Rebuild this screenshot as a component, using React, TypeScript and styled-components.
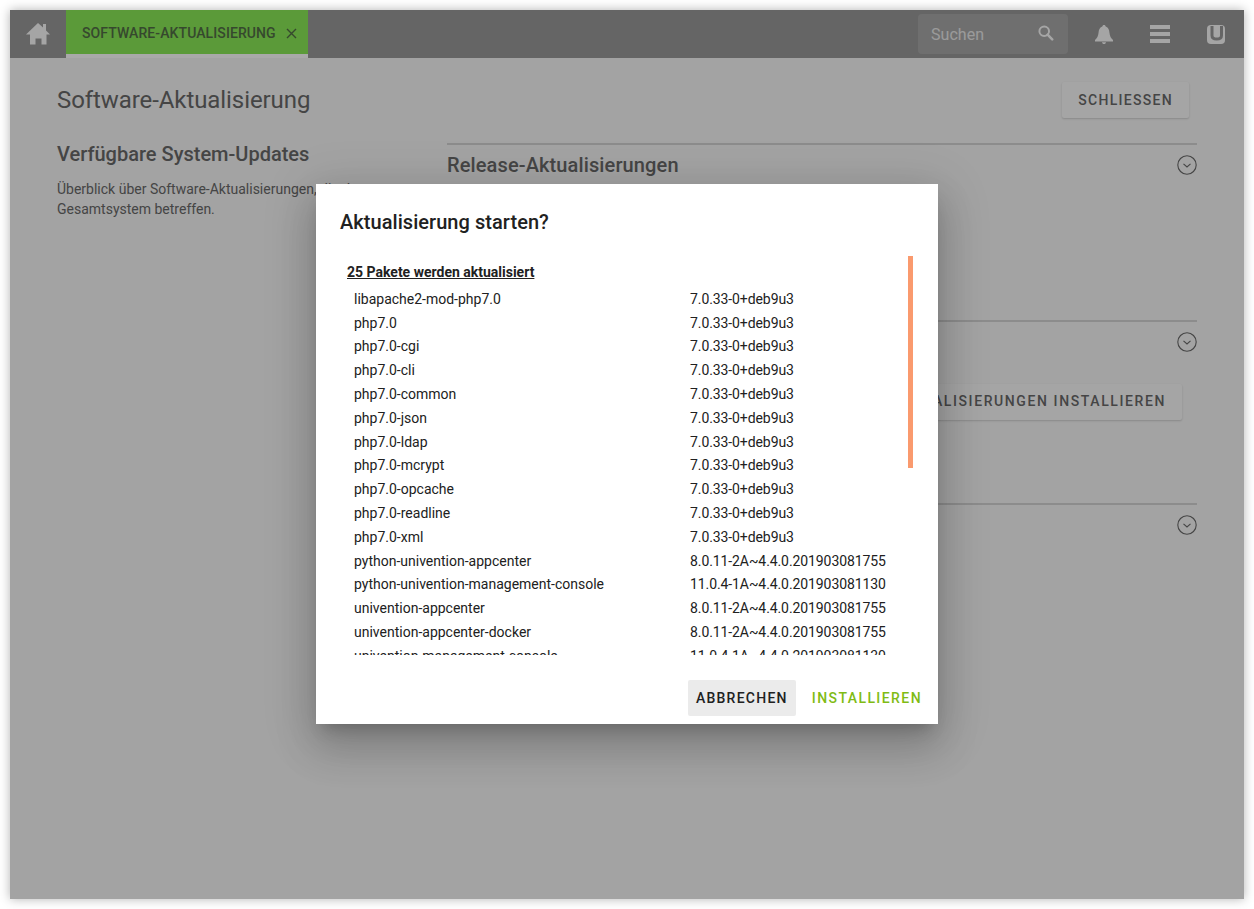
import React from "react";
import styled, { createGlobalStyle } from "styled-components";

const Global = createGlobalStyle`
  html, body { margin: 0; padding: 0; background: #fff; }
  body { font-family: Roboto, "Liberation Sans", sans-serif; font-size: 14px; }
  * { box-sizing: border-box; }
`;

const Page = styled.div`
  width: 1254px;
  height: 909px;
  padding: 10px;
  background: #fff;
  overflow: hidden;
`;

const Frame = styled.div`
  position: relative;
  width: 1234px;
  height: 889px;
  display: flex;
  flex-direction: column;
  background: #f0f0f0;
  box-shadow: 0 0 10px rgba(0, 0, 0, 0.3);
`;

const TopBar = styled.header`
  height: 48px;
  flex: none;
  display: flex;
  align-items: stretch;
  background: #969696;
`;

const BarIconCell = styled.div`
  width: 56px;
  flex: none;
  display: flex;
  align-items: center;
  justify-content: center;
  color: #f4f4f4;
`;

const Tab = styled.div`
  width: 242px;
  display: flex;
  align-items: center;
  justify-content: space-between;
  padding: 2px 11px 0 16px;
  background: #86e354;
  border-bottom: 4px solid #fafafa;
  color: #506b45;
  font-size: 14px;
  font-weight: 500;
  white-space: nowrap;
`;

const TabLabel = styled.span`
  letter-spacing: 0.09px;
`;

const Spacer = styled.div`
  flex: 1;
`;

const SearchBox = styled.div`
  width: 150px;
  height: 40px;
  margin: 4px 8px 0 0;
  padding: 0 14px 0 13px;
  display: flex;
  align-items: center;
  justify-content: space-between;
  border-radius: 4px;
  background: #a4a4a4;
  color: #e4e4e4;
  font-size: 16px;
  letter-spacing: 0.04px;
`;

const SearchGlyph = styled.span`
  display: flex;
  margin-top: -2px;
  color: #f4f4f4;
`;

const Main = styled.main`
  flex: 1;
  padding: 24px 47px 0;
`;

const TitleRow = styled.div`
  height: 36px;
  display: flex;
  align-items: center;
  justify-content: space-between;
  padding-right: 8px;
`;

const PageTitle = styled.h1`
  margin: 0;
  color: #666;
  font-size: 24px;
  font-weight: 400;
  letter-spacing: -0.08px;
`;

const RaisedButton = styled.div<{ $tracking: number; $lift?: number }>`
  height: 36px;
  display: inline-flex;
  align-items: center;
  padding: 0 16px ${(p) => p.$lift ?? 0}px;
  border-radius: 2px;
  background: #f4f4f4;
  color: #666;
  font-size: 14px;
  font-weight: 500;
  letter-spacing: ${(p) => p.$tracking}px;
  white-space: nowrap;
  box-shadow: 0 1px 2px rgba(0, 0, 0, 0.16);
`;

const Columns = styled.div`
  display: grid;
  grid-template-columns: 390px 750px;
  margin-top: 25px;
`;

const SideHeading = styled.h2`
  margin: 0;
  color: #666;
  font-size: 20px;
  font-weight: 500;
  line-height: 22px;
`;

const SideText = styled.p`
  margin: 14px 0 0;
  width: 330px;
  color: #666;
  font-size: 14px;
  line-height: 20px;
`;

const Section = styled.section<{ $h: number }>`
  height: ${(p) => p.$h}px;
  border-top: 2px solid #cfcfcf;
  padding-top: 10px;
`;

const SectionHeader = styled.div`
  display: flex;
  align-items: center;
  justify-content: space-between;
  height: 20px;
`;

const SectionTitle = styled.h3`
  margin: 0;
  color: #666;
  font-size: 20px;
  font-weight: 500;
  letter-spacing: 0.12px;
`;

const SectionAction = styled.div`
  display: flex;
  justify-content: flex-end;
  padding: 32px 15px 0 0;
`;

const Overlay = styled.div`
  position: absolute;
  inset: 0;
  display: flex;
  align-items: center;
  justify-content: center;
  background: rgba(0, 0, 0, 0.32);
`;

const Dialog = styled.div`
  position: relative;
  width: 622px;
  height: 540px;
  margin-top: -1px;
  display: flex;
  flex-direction: column;
  background: #fff;
  box-shadow: 0 11px 15px -7px rgba(0, 0, 0, 0.2), 0 24px 38px 3px rgba(0, 0, 0, 0.14),
    0 9px 46px 8px rgba(0, 0, 0, 0.12);
`;

const DialogTitle = styled.h2`
  margin: 0;
  padding: 24px 24px 0;
  height: 72px;
  color: #212121;
  font-size: 20px;
  font-weight: 500;
  line-height: 28px;
  letter-spacing: 0.05px;
`;

const DialogBody = styled.div`
  height: 399px;
  margin: 0 24px;
  overflow: hidden;
  padding: 7px 0 0 7px;
`;

const ListHeading = styled.div`
  color: #212121;
  font-size: 14px;
  font-weight: 700;
  line-height: 18px;
  text-decoration: underline;
  margin-bottom: 6.8px;
`;

const PackageRow = styled.div`
  display: grid;
  grid-template-columns: 336px 1fr;
  padding-left: 7px;
  color: #212121;
  font-size: 14px;
  line-height: 23.8px;
  white-space: nowrap;
`;

const PackageVersion = styled.span`
  letter-spacing: -0.09px;
`;

const ScrollThumb = styled.div`
  position: absolute;
  top: 72px;
  right: 25px;
  width: 5px;
  height: 212px;
  background: #fa9a6e;
`;

const DialogActions = styled.div`
  display: flex;
  justify-content: flex-end;
  align-items: center;
  gap: 8px;
  padding: 25px 8px 0 0;
`;

const FlatButton = styled.div<{ $primary?: boolean }>`
  height: 36px;
  display: inline-flex;
  align-items: center;
  padding: 0 8px;
  border-radius: 2px;
  background: ${(p) => (p.$primary ? "transparent" : "#ebebeb")};
  color: ${(p) => (p.$primary ? "#80bb14" : "#212121")};
  font-size: 14px;
  font-weight: 500;
  letter-spacing: ${(p) => (p.$primary ? 1.42 : 1.25)}px;
`;

const packages: [string, string][] = [
  ["libapache2-mod-php7.0", "7.0.33-0+deb9u3"],
  ["php7.0", "7.0.33-0+deb9u3"],
  ["php7.0-cgi", "7.0.33-0+deb9u3"],
  ["php7.0-cli", "7.0.33-0+deb9u3"],
  ["php7.0-common", "7.0.33-0+deb9u3"],
  ["php7.0-json", "7.0.33-0+deb9u3"],
  ["php7.0-ldap", "7.0.33-0+deb9u3"],
  ["php7.0-mcrypt", "7.0.33-0+deb9u3"],
  ["php7.0-opcache", "7.0.33-0+deb9u3"],
  ["php7.0-readline", "7.0.33-0+deb9u3"],
  ["php7.0-xml", "7.0.33-0+deb9u3"],
  ["python-univention-appcenter", "8.0.11-2A~4.4.0.201903081755"],
  ["python-univention-management-console", "11.0.4-1A~4.4.0.201903081130"],
  ["univention-appcenter", "8.0.11-2A~4.4.0.201903081755"],
  ["univention-appcenter-docker", "8.0.11-2A~4.4.0.201903081755"],
  ["univention-management-console", "11.0.4-1A~4.4.0.201903081130"],
];

const HomeIcon = () => (
  <svg width="24" height="22" viewBox="0 0 24 22" fill="currentColor">
    <path d="M12 0 17 4.500V1h3v6.500l4 4h-3.500v10h-5v-6h-6v6H4v-10H0z" />
  </svg>
);

const CloseIcon = () => (
  <svg width="11" height="11" viewBox="0 0 11 11" stroke="currentColor" strokeWidth="1.4" fill="none">
    <path d="M1 1 10 10M10 1 1 10" />
  </svg>
);

const SearchIcon = () => (
  <svg width="16" height="16" viewBox="0 0 18 18" fill="none" stroke="currentColor">
    <circle cx="7" cy="7" r="5.400" strokeWidth="2.200" />
    <path d="M10.800 10.800 16 16.200" strokeWidth="2.800" strokeLinecap="round" />
  </svg>
);

const BellIcon = () => (
  <svg width="18" height="19" viewBox="0 0 18 19" fill="currentColor">
    <path d="M9 0c1 0 1.500.6 1.700 1.500 2.800 1 3.500 3.500 3.800 6.500.3 3 1.300 5 3.500 7v1.500H0V15c2.200-2 3.200-4 3.500-7 .3-3 1-5.500 3.800-6.500C7.500.6 8 0 9 0z" />
    <path d="M7 17.200h4c0 1.100-1 1.800-2 1.800s-2-.7-2-1.800z" />
  </svg>
);

const MenuIcon = () => (
  <svg width="20" height="18" viewBox="0 0 20 18" fill="currentColor">
    <rect x="0" y="0" width="20" height="4" />
    <rect x="0" y="7" width="20" height="4" />
    <rect x="0" y="14" width="20" height="4" />
  </svg>
);

const LogoIcon = () => (
  <svg width="18" height="19" viewBox="0 0 18 19">
    <rect x="0" y="0" width="18" height="19" rx="4" fill="currentColor" />
    <path d="M5 1v9.500C5 13 6.800 14 9.700 14s4.800-1 4.800-3.500V1" fill="none" stroke="#969696" strokeWidth="3" />
  </svg>
);

const ChevronCircle = () => (
  <svg width="20" height="20" viewBox="0 0 20 20" fill="none" stroke="#666" strokeWidth="1.100">
    <circle cx="10" cy="10" r="9.200" />
    <path d="M6.500 8.800 10 12l3.500-3.200" />
  </svg>
);

export default function App() {
  return (
    <Page>
      <Global />
      <Frame>
        <TopBar>
          <BarIconCell>
            <HomeIcon />
          </BarIconCell>
          <Tab>
            <TabLabel>SOFTWARE-AKTUALISIERUNG</TabLabel>
            <CloseIcon />
          </Tab>
          <Spacer />
          <SearchBox>
            <span>Suchen</span>
            <SearchGlyph>
              <SearchIcon />
            </SearchGlyph>
          </SearchBox>
          <BarIconCell>
            <BellIcon />
          </BarIconCell>
          <BarIconCell>
            <MenuIcon />
          </BarIconCell>
          <BarIconCell>
            <LogoIcon />
          </BarIconCell>
        </TopBar>
        <Main>
          <TitleRow>
            <PageTitle>Software-Aktualisierung</PageTitle>
            <RaisedButton $tracking={1.3}>SCHLIESSEN</RaisedButton>
          </TitleRow>
          <Columns>
            <div>
              <SideHeading>Verfügbare System-Updates</SideHeading>
              <SideText>Überblick über Software-Aktualisierungen, die das Gesamtsystem betreffen.</SideText>
            </div>
            <div>
              <Section $h={177}>
                <SectionHeader>
                  <SectionTitle>Release-Aktualisierungen</SectionTitle>
                  <ChevronCircle />
                </SectionHeader>
              </Section>
              <Section $h={183}>
                <SectionHeader>
                  <SectionTitle>Paket-Aktualisierungen</SectionTitle>
                  <ChevronCircle />
                </SectionHeader>
                <SectionAction>
                  <RaisedButton $tracking={1.6} $lift={2}>PAKET-AKTUALISIERUNGEN INSTALLIEREN</RaisedButton>
                </SectionAction>
              </Section>
              <Section $h={100}>
                <SectionHeader>
                  <SectionTitle>App Center-Aktualisierungen</SectionTitle>
                  <ChevronCircle />
                </SectionHeader>
              </Section>
            </div>
          </Columns>
        </Main>
        <Overlay>
          <Dialog>
            <DialogTitle>Aktualisierung starten?</DialogTitle>
            <DialogBody>
              <ListHeading>25 Pakete werden aktualisiert</ListHeading>
              {packages.map(([name, version]) => (
                <PackageRow key={name}>
                  <span>{name}</span>
                  <PackageVersion>{version}</PackageVersion>
                </PackageRow>
              ))}
            </DialogBody>
            <ScrollThumb />
            <DialogActions>
              <FlatButton>ABBRECHEN</FlatButton>
              <FlatButton $primary>INSTALLIEREN</FlatButton>
            </DialogActions>
          </Dialog>
        </Overlay>
      </Frame>
    </Page>
  );
}
